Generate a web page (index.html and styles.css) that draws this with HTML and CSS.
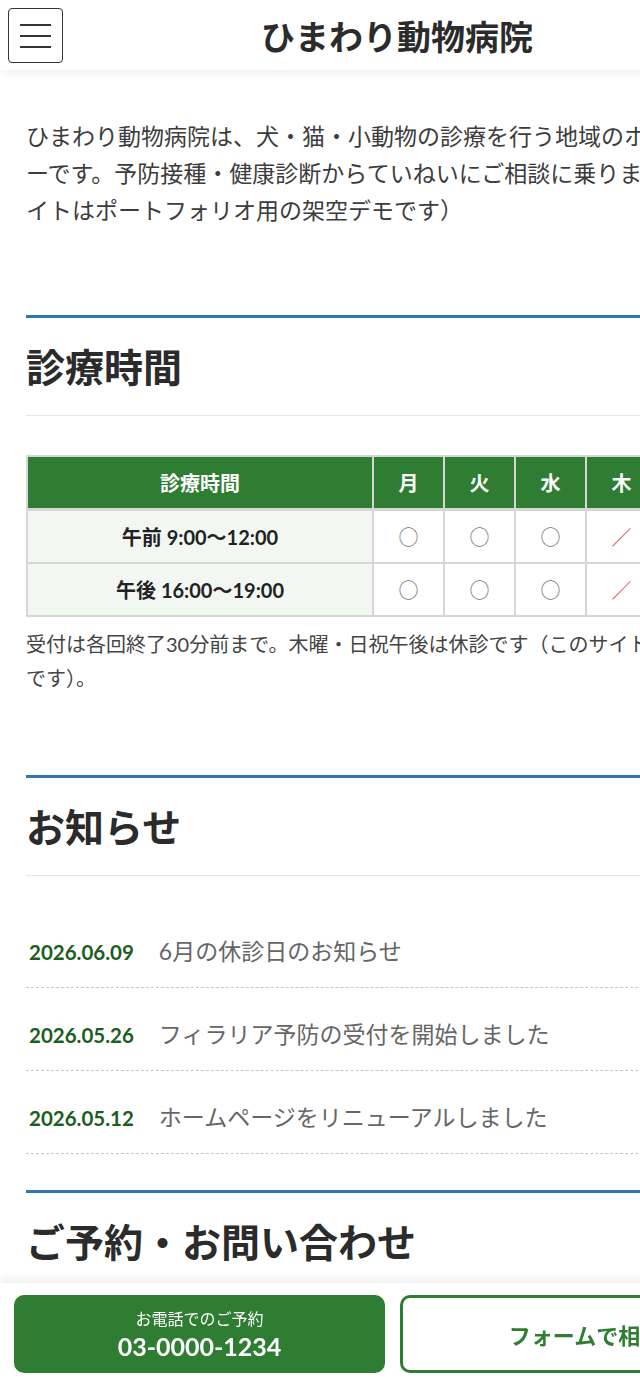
FILE: index.html
```html
<!DOCTYPE html>
<html lang="ja">
<head>
<meta charset="utf-8">
<title>ひまわり動物病院</title>
<link rel="stylesheet" href="styles.css">
</head>
<body>
<div class="page">
  <header class="site-header">
    <button class="menu-btn" type="button" aria-label="メニュー"><span></span><span></span><span></span></button>
    <h1 class="site-title">ひまわり動物病院</h1>
    <span class="header-spacer"></span>
  </header>

  <main class="content">
    <p class="intro">ひまわり動物病院は、犬・猫・小動物の診療を行う地域のホームドクターです。予防接種・健康診断からていねいにご相談に乗ります（このサイトはポートフォリオ用の架空デモです）</p>

    <section class="section">
      <h2 class="section-title">診療時間</h2>
      <div class="table-wrap">
        <table class="hours">
          <colgroup>
            <col class="col-time"><col class="col-day"><col class="col-day"><col class="col-day"><col class="col-day"><col class="col-day"><col class="col-day"><col class="col-day">
          </colgroup>
          <thead>
            <tr><th>診療時間</th><th>月</th><th>火</th><th>水</th><th>木</th><th>金</th><th>土</th><th>日</th></tr>
          </thead>
          <tbody>
            <tr><th>午前 9:00〜12:00</th><td>○</td><td>○</td><td>○</td><td class="closed">／</td><td>○</td><td>○</td><td class="closed">／</td></tr>
            <tr><th>午後 16:00〜19:00</th><td>○</td><td>○</td><td>○</td><td class="closed">／</td><td>○</td><td>○</td><td class="closed">／</td></tr>
          </tbody>
        </table>
      </div>
      <p class="note">受付は各回終了30分前まで。木曜・日祝午後は休診です（このサイトは架空デモです）。</p>
    </section>

    <section class="section">
      <h2 class="section-title">お知らせ</h2>
      <ul class="news">
        <li><span class="news-date">2026.06.09</span><span class="news-title">6月の休診日のお知らせ</span></li>
        <li><span class="news-date">2026.05.26</span><span class="news-title">フィラリア予防の受付を開始しました</span></li>
        <li><span class="news-date">2026.05.12</span><span class="news-title">ホームページをリニューアルしました</span></li>
      </ul>
    </section>

    <section class="section">
      <h2 class="section-title">ご予約・お問い合わせ</h2>
    </section>
  </main>
</div>

<nav class="cta-bar">
  <a class="cta-tel" href="#"><span class="cta-tel-label">お電話でのご予約</span><span class="cta-tel-number">03-0000-1234</span></a>
  <a class="cta-form" href="#">フォームで相談</a>
</nav>
</body>
</html>
```

FILE: styles.css
```css
html {
  scrollbar-width: none;
}

body {
  margin: 0;
  background: #fff;
  color: #333;
  font-family: Lato, "Noto Sans CJK JP", sans-serif;
  overflow-x: hidden;
}

.page {
  width: 794px;
}

.site-header {
  position: relative;
  display: grid;
  grid-template-columns: 55px 1fr 55px;
  align-items: center;
  padding: 8px 8px 7px;
  background: #fff;
  box-shadow: 0 3px 8px rgba(0, 0, 0, 0.06);
}

.menu-btn {
  width: 55px;
  height: 55px;
  box-sizing: border-box;
  padding: 0;
  border: 1.5px solid #333;
  border-radius: 4px;
  background: #fff;
  display: flex;
  flex-direction: column;
  align-items: center;
  justify-content: center;
  gap: 9px;
}

.menu-btn span {
  display: block;
  width: 31px;
  height: 2px;
  background: #333;
}

.site-title {
  margin: 0;
  text-align: center;
  font-family: "Noto Sans CJK JP", sans-serif;
  font-size: 34px;
  font-weight: 700;
  line-height: 44px;
  color: #2b2b2b;
}

.content {
  padding: 0 26px 40px;
}

.intro {
  margin: 48px 0 87px;
  font-size: 23px;
  line-height: 36.8px;
  color: #3c3c3c;
}

.section {
  margin-top: 36px;
  border-top: 3px solid #2e75b6;
}

.section-title {
  margin: 0;
  padding: 20px 0 22px;
  font-family: "Noto Sans CJK JP", sans-serif;
  font-size: 39px;
  line-height: 55px;
  font-weight: 700;
  color: #2b2b2b;
  border-bottom: 1.5px solid #e8e8e8;
}

.table-wrap {
  margin-top: 39px;
  overflow: hidden;
}

.hours {
  border-collapse: collapse;
  table-layout: fixed;
  width: 843px;
  font-size: 20px;
}

.col-time {
  width: 346px;
}

.col-day {
  width: 71px;
}

.hours th,
.hours td {
  border: 2px solid #d6d6d6;
  text-align: center;
  padding: 10.5px 0;
  line-height: 30px;
}

.hours thead th {
  background: #2e7d32;
  color: #fff;
  font-weight: 700;
  border-bottom-width: 3px;
}

.hours tbody th {
  background: #f2f7f2;
  color: #222;
  font-weight: 700;
}

.hours td {
  font-family: "Noto Sans CJK JP", sans-serif;
  color: #777;
  font-weight: 400;
}

.hours td.closed {
  color: #d9534f;
}

.note {
  margin: 10px 0 80px;
  font-size: 20px;
  line-height: 34px;
  color: #444;
}

.news {
  list-style: none;
  margin: 0;
  padding: 29px 0 0;
}

.news li {
  margin-top: 11px;
  padding: 17px 0 17px 3px;
  display: flex;
  align-items: baseline;
  gap: 25px;
  line-height: 36px;
  border-bottom: 1px dashed #c8c8c8;
}

.news-date {
  font-size: 20.5px;
  font-weight: 700;
  color: #1b5e20;
}

.news-title {
  font-size: 23px;
  color: #666;
}

.cta-bar {
  position: fixed;
  left: 0;
  bottom: 0;
  width: 785px;
  box-sizing: border-box;
  padding: 12px 14px;
  display: grid;
  grid-template-columns: 1fr 1fr;
  gap: 15px;
  background: #fff;
  box-shadow: 0 -3px 10px rgba(0, 0, 0, 0.08);
}

.cta-tel {
  height: 78px;
  border-radius: 10px;
  background: #2e7d32;
  color: #fff;
  text-decoration: none;
  display: flex;
  flex-direction: column;
  align-items: center;
  justify-content: center;
}

.cta-tel-label {
  font-size: 16px;
  line-height: 24px;
}

.cta-tel-number {
  font-size: 25px;
  font-weight: 700;
  line-height: 30px;
}

.cta-form {
  height: 78px;
  box-sizing: border-box;
  border: 3px solid #2e7d32;
  border-radius: 10px;
  background: #fff;
  color: #2e7d32;
  text-decoration: none;
  font-size: 22px;
  font-weight: 700;
  display: flex;
  align-items: center;
  justify-content: center;
}
```
